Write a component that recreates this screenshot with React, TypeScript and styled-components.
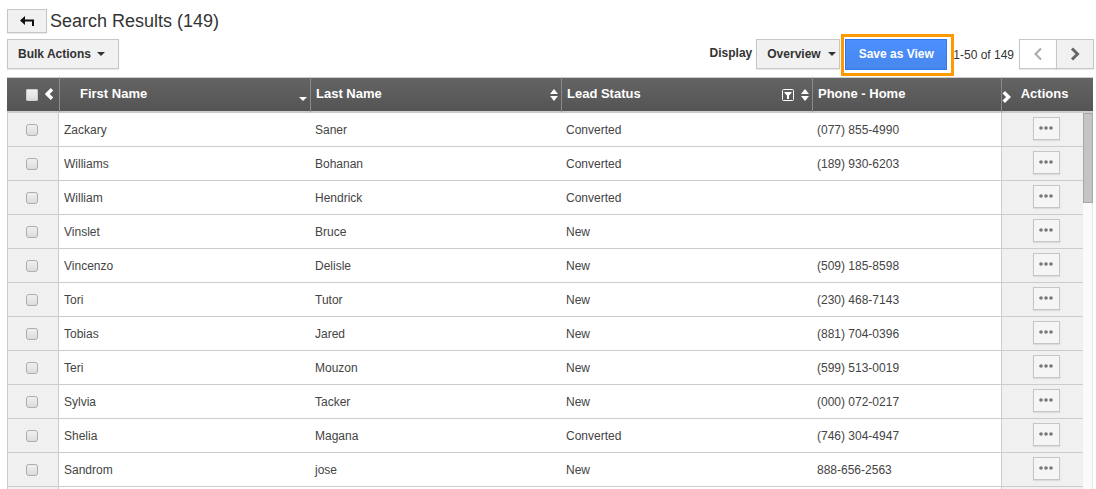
import React from "react";
import styled, { createGlobalStyle, css } from "styled-components";

const GlobalStyle = createGlobalStyle`
  * { box-sizing: border-box; }
  body {
    margin: 0;
    background: #fff;
    color: #333;
    font: 12px/16px "Liberation Sans", Arial, sans-serif;
  }
  button, select { font: inherit; color: inherit; cursor: pointer; }
`;

const Page = styled.main`
  display: flex;
  flex-direction: column;
  height: 100vh;
  overflow: hidden;
  padding: 9px 2px 0 7px;
`;

const TitleBar = styled.header`
  display: flex;
  align-items: center;
  gap: 3px;
  height: 24px;
`;

const Title = styled.h1`
  margin: 0;
  font-size: 18px;
  line-height: 24px;
  font-weight: 400;
`;

const surface = css`
  border: 1px solid #c6c6c6;
  border-radius: 0;
  background: #f1f1f1;
  box-shadow: 0 1px 1px rgba(0, 0, 0, 0.08);
`;

const BackButton = styled.button`
  ${surface}
  display: flex;
  align-items: center;
  justify-content: center;
  width: 40px;
  height: 24px;
  padding: 0;
`;

const Toolbar = styled.div`
  display: flex;
  justify-content: space-between;
  align-items: center;
  height: 30px;
  margin: 6px 0 8px;
`;

const ToolGroup = styled.div`
  display: flex;
  align-items: center;
`;

const MenuButton = styled.button`
  ${surface}
  display: flex;
  align-items: center;
  gap: 6px;
  height: 30px;
  padding: 0 13px 0 10px;
  font-weight: 700;
`;

const DisplayLabel = styled.label`
  margin-right: 4px;
  padding-bottom: 2px;
  font-weight: 700;
`;

const SelectBox = styled.div`
  display: grid;
  align-items: center;
  width: 84px;
  margin-right: 5px;

  > * { grid-area: 1 / 1; }
  > svg { justify-self: end; margin-right: 4px; pointer-events: none; }
`;

const Select = styled.select`
  ${surface}
  appearance: none;
  width: 100%;
  height: 30px;
  padding: 0 10px;
  font-weight: 700;
`;

const Highlight = styled.div`
  position: relative;
  margin-right: 6px;

  &::after {
    content: "";
    position: absolute;
    inset: -5px -7px -6px -4px;
    border: 3px solid #ff9900;
    pointer-events: none;
  }
`;

const SaveButton = styled.button`
  display: block;
  width: 102px;
  height: 31px;
  padding: 0;
  border: 1px solid #3079ed;
  background: linear-gradient(#4d90fe, #4787ed);
  && { color: #fff; }
  font-weight: 700;
`;

const RangeText = styled.span`
  padding-top: 2px;
  margin-right: 5px;
`;

const PageButton = styled.button<{ $idle?: boolean }>`
  ${surface}
  display: flex;
  align-items: center;
  justify-content: center;
  width: 38px;
  height: 30px;
  padding: 0;
  && { color: ${(p) => (p.$idle ? "#aaa" : "#666")}; }
  background: ${(p) => (p.$idle ? "#fff" : "#f1f1f1")};

  & + & { margin-left: -1px; }
`;

const TableArea = styled.div`
  padding-right: 1px;
`;

const Table = styled.table`
  width: 100%;
  table-layout: fixed;
  border-collapse: separate;
  border-spacing: 0;
`;

const Col = styled.col<{ $width?: number }>`
  width: ${(p) => (p.$width ? `${p.$width}px` : "auto")};
`;

const HeadCell = styled.th<{ $indent?: number; $first?: boolean }>`
  height: 36px;
  padding: 0 3px 2px ${(p) => p.$indent ?? 5}px;
  border-top: 1px solid #ccc;
  border-bottom: 2px solid #ccc;
  border-left: ${(p) => (p.$first ? "0" : "1px solid #8a8a8a")};
  background: linear-gradient(#646464, #545454);
  color: #fff;
  font-size: 13px;
  text-align: left;
`;

const HeadContent = styled.div`
  display: flex;
  align-items: center;
  justify-content: space-between;
`;

const HeadIcons = styled.span`
  display: flex;
  align-items: center;
  gap: 7px;
`;

const SortButton = styled.button`
  display: flex;
  padding: 2px 0 0;
  border: 0;
  background: none;
  && { color: #fff; }
`;

const Cell = styled.td`
  height: 34px;
  padding: 0 5px;
  border-bottom: 1px solid #ccc;
  color: #444;
`;

const EdgeCell = styled(Cell)<{ $side: "left" | "right" }>`
  padding: 0 ${(p) => (p.$side === "left" ? 8 : 0)}px 0 ${(p) => (p.$side === "left" ? 6 : 8)}px;
  background: #f0f0f0;
  text-align: center;
  border-left: 1px solid #ccc;
  border-right: ${(p) => (p.$side === "left" ? "1px solid #ccc" : "0")};
`;

const ScrollCell = styled.td`
  padding: 0;
  vertical-align: top;
  background: #fafafa;
  border-right: 1px solid #e6e6e6;
`;

const ScrollThumb = styled.div`
  height: 90px;
  margin-right: -1px;
  border: 1px solid #a8a8a8;
  background: #c4c4c4;
`;

const CheckBox = styled.input<{ $plain?: boolean }>`
  appearance: none;
  display: inline-block;
  width: 12px;
  height: 12px;
  margin: ${(p) => (p.$plain ? "2px 0 0" : "0")};
  vertical-align: middle;
  border: 1px solid ${(p) => (p.$plain ? "#ccc" : "#adadad")};
  border-radius: ${(p) => (p.$plain ? 1 : 3)}px;
  background: linear-gradient(#f0f0f0, #dcdcdc);
`;

const CheckHead = styled.div`
  display: flex;
  align-items: center;
  gap: 7px;
`;

const ActionsHead = styled.div`
  display: flex;
  align-items: center;
  gap: 10px;

  > svg { margin-top: 6px; }
`;

const MoreButton = styled.button`
  ${surface}
  display: inline-flex;
  align-items: center;
  justify-content: center;
  width: 27px;
  height: 23px;
  padding: 0 0 2px;
  vertical-align: middle;
  margin-bottom: 2px;
  background: #f5f5f5;
`;

const Caret = () => (
  <svg width="8" height="4" viewBox="0 0 8 4" aria-hidden="true">
    <path d="M0 0h8L4 4z" fill="currentColor" />
  </svg>
);

const Chevron = ({ dir, size, stroke }: { dir: "left" | "right"; size: number; stroke: number }) => (
  <svg width={size * 0.625} height={size} viewBox="0 0 10 16" aria-hidden="true">
    <path
      d={dir === "left" ? "M8 2.5L2.5 8L8 13.5" : "M2 2.5L7.5 8L2 13.5"}
      fill="none"
      stroke="currentColor"
      strokeWidth={stroke}
    />
  </svg>
);

const SortIcon = ({ only }: { only?: boolean }) => (
  <svg width="8" height="12" viewBox="0 0 8 12" aria-hidden="true">
    {!only && <path d="M0 5L4 0L8 5z" fill="currentColor" />}
    <path d={only ? "M0 8h8L4 12z" : "M0 7L4 12L8 7z"} fill="currentColor" />
  </svg>
);

const FilterIcon = () => (
  <svg width="12" height="12" viewBox="0 0 12 12" aria-hidden="true">
    <rect x="0.5" y="0.5" width="11" height="11" rx="1" fill="none" stroke="currentColor" />
    <path d="M2.5 3h7v1L7 6.5V10H5V6.5L2.5 4z" fill="currentColor" />
  </svg>
);

const people = [
  ["Zackary", "Saner", "Converted", "(077) 855-4990"],
  ["Williams", "Bohanan", "Converted", "(189) 930-6203"],
  ["William", "Hendrick", "Converted", ""],
  ["Vinslet", "Bruce", "New", ""],
  ["Vincenzo", "Delisle", "New", "(509) 185-8598"],
  ["Tori", "Tutor", "New", "(230) 468-7143"],
  ["Tobias", "Jared", "New", "(881) 704-0396"],
  ["Teri", "Mouzon", "New", "(599) 513-0019"],
  ["Sylvia", "Tacker", "New", "(000) 072-0217"],
  ["Shelia", "Magana", "Converted", "(746) 304-4947"],
  ["Sandrom", "jose", "New", "888-656-2563"],
  ["", "", "", ""],
];

export default function App() {
  return (
    <>
      <GlobalStyle />
      <Page>
        <TitleBar>
          <BackButton aria-label="Back">
            <svg width="14" height="11" viewBox="0 0 14 11" aria-hidden="true">
              <path d="M0 4.5L5 0v3.5h9V10h-2V5.5H5V9z" fill="#111" />
            </svg>
          </BackButton>
          <Title>Search Results (149)</Title>
        </TitleBar>

        <Toolbar>
          <MenuButton aria-haspopup="menu">
            Bulk Actions <Caret />
          </MenuButton>
          <ToolGroup>
            <DisplayLabel htmlFor="display">Display</DisplayLabel>
            <SelectBox>
              <Select id="display" defaultValue="Overview">
                <option>Overview</option>
              </Select>
              <Caret />
            </SelectBox>
            <Highlight>
              <SaveButton>Save as View</SaveButton>
            </Highlight>
            <RangeText>1-50 of 149</RangeText>
            <PageButton $idle aria-label="Previous page">
              <Chevron dir="left" size={16} stroke={2} />
            </PageButton>
            <PageButton aria-label="Next page">
              <Chevron dir="right" size={16} stroke={3} />
            </PageButton>
          </ToolGroup>
        </Toolbar>

        <TableArea>
          <Table>
            <colgroup>
              <Col $width={52} />
              <Col $width={251} />
              <Col $width={251} />
              <Col $width={251} />
              <Col />
              <Col $width={82} />
              <Col $width={10} />
            </colgroup>
            <thead>
              <tr>
                <HeadCell $indent={19} $first>
                  <CheckHead>
                    <CheckBox $plain type="checkbox" aria-label="Select all" />
                    <Chevron dir="left" size={14} stroke={4} />
                  </CheckHead>
                </HeadCell>
                <HeadCell $indent={20}>
                  <HeadContent>
                    First Name
                    <SortButton aria-label="Sort by first name"><SortIcon only /></SortButton>
                  </HeadContent>
                </HeadCell>
                <HeadCell>
                  <HeadContent>
                    Last Name
                    <SortButton aria-label="Sort by last name"><SortIcon /></SortButton>
                  </HeadContent>
                </HeadCell>
                <HeadCell>
                  <HeadContent>
                    Lead Status
                    <HeadIcons>
                      <SortButton aria-label="Filter by lead status"><FilterIcon /></SortButton>
                      <SortButton aria-label="Sort by lead status"><SortIcon /></SortButton>
                    </HeadIcons>
                  </HeadContent>
                </HeadCell>
                <HeadCell>Phone - Home</HeadCell>
                <HeadCell colSpan={2} $indent={0}>
                  <ActionsHead>
                    <Chevron dir="right" size={14} stroke={4} />
                    Actions
                  </ActionsHead>
                </HeadCell>
              </tr>
            </thead>
            <tbody>
              {people.map(([first, last, status, phone], i) => (
                <tr key={i}>
                  <EdgeCell $side="left">
                    <CheckBox type="checkbox" aria-label={`Select ${first} ${last}`} />
                  </EdgeCell>
                  <Cell>{first}</Cell>
                  <Cell>{last}</Cell>
                  <Cell>{status}</Cell>
                  <Cell>{phone}</Cell>
                  <EdgeCell $side="right">
                    <MoreButton aria-label={`Actions for ${first} ${last}`}>
                      <svg width="14" height="4" viewBox="0 0 14 4" aria-hidden="true">
                        <g fill="#777">
                          <circle cx="2" cy="2" r="1.8" />
                          <circle cx="7" cy="2" r="1.8" />
                          <circle cx="12" cy="2" r="1.8" />
                        </g>
                      </svg>
                    </MoreButton>
                  </EdgeCell>
                  {i === 0 && (
                    <ScrollCell rowSpan={people.length}>
                      <ScrollThumb />
                    </ScrollCell>
                  )}
                </tr>
              ))}
            </tbody>
          </Table>
        </TableArea>
      </Page>
    </>
  );
}
